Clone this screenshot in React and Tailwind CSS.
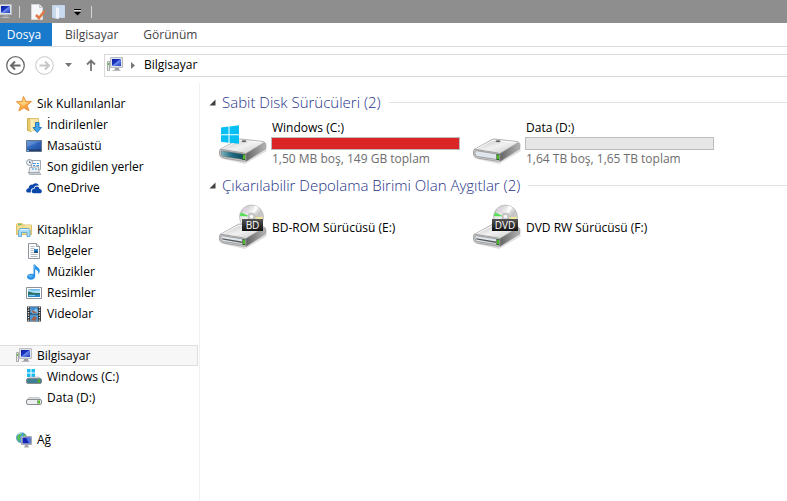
const StarIcon = () => (
  <svg width="16" height="16" viewBox="0 0 16 16">
    <defs>
      <linearGradient id="star" x1="0" y1="0" x2="1" y2="1">
        <stop offset="0" stopColor="#ffd36b" />
        <stop offset="0.5" stopColor="#fdb04a" />
        <stop offset="1" stopColor="#f08a2c" />
      </linearGradient>
    </defs>
    <path d="M7.500.3l2.300 4.900 5.800.3-4.400 3.800 1.800 5.600-5-3-5.200 3.200 1.700-5.800L.3 5.700l5.500-.4z" fill="url(#star)" stroke="#dd8128" strokeWidth=".7" strokeLinejoin="round" />
    <path d="M7.800 2.500l1.400 3.700 4 .3-6 2.900-4-2.900 3.600-.2z" fill="#ffe6a0" opacity=".6" />
  </svg>
);

const DownloadsIcon = () => (
  <svg width="16" height="16" viewBox="0 0 16 16">
    <path d="M1.500 1.500h4v13l-4-1z" fill="#e8c96b" stroke="#d0ae52" />
    <path d="M4.500 1.500h8v12h-8z" fill="#f8e3a0" stroke="#dfc26e" />
    <path d="M4.500 2v12.500l3-1V3z" fill="#fbeeba" />
    <path d="M9.500 5.500h3.500v5h2.500l-4.300 5-4.200-5h2.500z" fill="#3fa4ec" stroke="#1b6fc0" strokeWidth=".9" />
  </svg>
);

const DesktopIcon = () => (
  <svg width="16" height="16" viewBox="0 0 16 16">
    <defs>
      <linearGradient id="desktop" x1="0" y1="0" x2="1" y2="1">
        <stop offset="0" stopColor="#4f8ad4" />
        <stop offset="0.5" stopColor="#2f66bd" />
        <stop offset="1" stopColor="#1d4796" />
      </linearGradient>
    </defs>
    <path d="M.5 2.500h15v11H.5z" fill="url(#desktop)" stroke="#64748c" />
    <path d="M1 3h14L1 9z" fill="#fff" opacity=".15" />
    <path d="M1 11.500h14V13H1z" fill="#203f6c" />
    <path d="M1 12h2v1H1z" fill="#5ec4ef" />
  </svg>
);

const RecentIcon = () => (
  <svg width="16" height="16" viewBox="0 0 16 16">
    <path d="M5.500 1.500h9v9h-9z" fill="#f7f9fb" stroke="#a3a9b0" />
    <path d="M3.500 8.500l9-1 .5 6H3z" fill="#e9eef2" stroke="#a3a9b0" />
    <path d="M7 4.500h3M11 4.500h2M7 6.500h2M10.500 6.500H13M6 10h2M9 10h2" stroke="#3f9ae0" />
    <path d="M2 13.500h11.500l1.500 2H3.500z" fill="#c9ced2" stroke="#999fa5" strokeWidth=".7" />
    <circle cx="3.500" cy="3.500" r="3" fill="#eef3f8" stroke="#8d99a6" />
    <path d="M3.500 1.800v1.900H5" stroke="#47586b" strokeWidth=".8" fill="none" />
  </svg>
);

const OneDriveIcon = () => (
  <svg width="16" height="16" viewBox="0 0 16 16">
    <path d="M.2 11c0-1.700 1.100-2.700 2.500-2.800C2.700 5.500 5 4.200 7 4.700c1-1.700 4.500-2.300 6 1-4-.7-5 1.300-5.100 2.500C5.500 8 4.500 9.500 4.900 12.500H2C.9 12.500.2 11.900.2 11z" fill="#0a47a8" />
    <path d="M5.700 11.200c0-1.500 1.200-2.400 2.700-2.200C8.500 6 12.800 5.600 13.500 8.900c3 0 3.100 4.300.2 4.300H7.800c-1.400 0-2.100-.9-2.100-2z" fill="#0a47a8" />
  </svg>
);

const LibrariesIcon = () => (
  <svg width="16" height="16" viewBox="0 0 16 16">
    <path d="M.5 2.500l1-1H6l1 1.500h8.500v9.500H.5z" fill="#f6dd8c" stroke="#dcc069" />
    <path d="M2 2.700h3.500" stroke="#4fb56a" />
    <path d="M9 4h6" stroke="#fdf3c5" />
    <path d="M2.500 14.500V8.500l1.500-2h8.500l1.500 2v6h-3v-4h-5.500v4z" fill="#a9dbf5" stroke="#5aa6d6" strokeWidth=".9" />
    <path d="M4 7.500h8.500" stroke="#e2f5fd" />
  </svg>
);

const DocumentsIcon = () => (
  <svg width="16" height="16" viewBox="0 0 16 16">
    <path d="M2.500.5h8l3 3v12h-11z" fill="#fcfdfe" stroke="#8f949b" />
    <path d="M10.500.5v3h3" fill="#e3e7eb" stroke="#8f949b" />
    <path d="M4.500 3.500h4M4.500 5.500h4M4.500 7.500h3M4.500 9.500h3M4.500 11.500h7M4.500 13.500h7" stroke="#b4b9c0" />
    <path d="M8 6h4v4H8z" fill="#2e88d0" />
    <path d="M8 9l2-1.500L12 9v1H8z" fill="#224d79" />
  </svg>
);

const MusicIcon = () => (
  <svg width="16" height="16" viewBox="0 0 16 16">
    <path d="M7.500.5h1.700c.4 2.200 4.800 3 4.600 6.600-.1 1.300-.7 2.500-1.600 3.500.7-2.900-.9-4.600-3-5.300v7.200c0 1.900-2 3.200-4.300 3.200C2.700 15.700 1 14.500 1 12.800c0-1.900 2.300-3 4.500-3 .8 0 1.500.1 2 .4z" fill="#2891e8" />
    <ellipse cx="4.500" cy="12" rx="2.300" ry="1.300" fill="#5fb2f2" />
    <path d="M8.300 1v4" stroke="#8ccaf6" strokeWidth=".8" />
  </svg>
);

const PicturesIcon = () => (
  <svg width="16" height="16" viewBox="0 0 16 16">
    <path d="M.5 2.500h15v11H.5z" fill="#fff" stroke="#8d9299" />
    <path d="M2 4h12v8H2z" fill="#b5e0f6" />
    <path d="M2 4h12v1.500L6 6z" fill="#6fc0ec" />
    <path d="M2 6.500c3 .2 5 2 12 1.500v2H2z" fill="#2c7564" />
    <path d="M2 9.500h12V12H2z" fill="#2b83c4" />
    <path d="M3 10.500h6" stroke="#7fd0ee" />
  </svg>
);

const VideosIcon = () => (
  <svg width="16" height="16" viewBox="0 0 16 16">
    <path d="M1 .5h14v15H1z" fill="#2c2f33" />
    <path d="M4 1h8v6.500H4z" fill="#3f87c6" />
    <path d="M4 8.500h8V15H4z" fill="#4b9bd8" />
    <path d="M4 2l3 3 3-3 2 3v2.500H6z" fill="#7dc2ea" />
    <path d="M5 4l3 1 3 2H7zM5 14l3-4 3 2-2 3z" fill="#a7604b" />
    <path d="M2.500 1v14M13.500 1v14" stroke="#e6e9ec" strokeWidth="1.400" strokeDasharray="1.300 1.200" />
  </svg>
);

const ComputerIcon = () => (
  <svg width="16" height="16" viewBox="0 0 16 16">
    <defs>
      <linearGradient id="screen" x1="0" y1="0" x2="1" y2="1">
        <stop offset="0" stopColor="#0b1e9c" />
        <stop offset="0.45" stopColor="#1a35c4" />
        <stop offset="0.5" stopColor="#6f8dea" />
        <stop offset="1" stopColor="#1c39bd" />
      </linearGradient>
    </defs>
    <path d="M.5 4.500h2v9h-2z" fill="#e8ebe8" stroke="#9ea39e" strokeWidth=".9" />
    <path d="M1 6h1v2H1z" fill="#4fbf3c" />
    <path d="M3.500.5h12v10h-12z" fill="#dfe2e6" stroke="#b9bdc2" />
    <path d="M5 2h9v7H5z" fill="url(#screen)" />
    <path d="M8 11h4l.5 2h-5z" fill="#9a9ea4" />
    <path d="M5.500 13.500h8" stroke="#b8bcc0" />
  </svg>
);

const DriveIcon = ({ system }) => (
  <svg width="16" height="16" viewBox="0 0 16 16">
    {system && <path d="M1 0h3.500v3.500H1zM5.500 0H9v3.500H5.500zM1 4.500h3.500V8H1zM5.500 4.500H9V8H5.500z" fill="#19bdf2" />}
    <path d={system ? 'M3 8h10l2.500 2.500H.5z' : 'M3 7.500h10l2.500 3H.5z'} fill="#d9dbdd" stroke="#b1b4b7" strokeWidth=".6" />
    <rect x=".5" y="9.500" width="15" height="5" rx="1.500" fill={system ? '#3d7f95' : '#eceeef'} stroke="#8b8e91" />
    <path d="M12 10.500h2v3h-2z" fill="#4cbb17" />
    <path d="M11.500 10v4" stroke="#777" strokeWidth=".6" />
  </svg>
);

const NetworkIcon = () => (
  <svg width="16" height="16" viewBox="0 0 16 16">
    <circle cx="5.500" cy="5.800" r="5" fill="#3f9fe0" stroke="#2b6fae" strokeWidth=".6" />
    <path d="M2 3c2-2 3-1.500 4-1.500L5 4 3.500 5l1 2-1 2.500C1 8.500.6 5 2 3zM7.500 1.500c2 .5 2.500 1.500 3 3h-3z" fill="#5dbe52" />
    <path d="M2 2.500c1.500-1.500 3-1.500 4-1.500" stroke="#d6f3fd" fill="none" />
    <path d="M5.500 4.500h10v8h-10z" fill="#dfe2e6" stroke="#a4a8ad" />
    <path d="M6.500 5.500h8v6h-8z" fill="#1226b0" />
    <path d="M10 5.500h4.500v6H13z" fill="#5474e0" />
    <path d="M9 13h3l1 2.500H8z" fill="#a5a9ae" />
  </svg>
);

const LargeDriveIcon = ({ kind, label }) => (
  <svg width="48" height="48" viewBox="0 0 48 48" className="shrink-0">
    <defs>
      <linearGradient id="driveTop" x1="0" y1="0" x2="1" y2="1">
        <stop offset="0" stopColor="#b9b9b9" />
        <stop offset="0.5" stopColor="#f1f1f1" />
        <stop offset="1" stopColor="#c4c4c4" />
      </linearGradient>
      <linearGradient id="driveSide" x1="0" y1="0" x2="1" y2="0">
        <stop offset="0" stopColor="#5c5c5c" />
        <stop offset="1" stopColor="#b5b5b5" />
      </linearGradient>
      <linearGradient id="disc" x1="0" y1="0" x2="1" y2="1">
        <stop offset="0" stopColor="#b4b4b4" />
        <stop offset="0.4" stopColor="#f2f2f2" />
        <stop offset="0.6" stopColor="#c3c3c3" />
        <stop offset="1" stopColor="#e9e9e9" />
      </linearGradient>
      <linearGradient id="teal" x1="0" y1="0" x2="1" y2="0">
        <stop offset="0" stopColor="#7fb3bd" />
        <stop offset="0.5" stopColor="#1f6c83" />
        <stop offset="1" stopColor="#0f4c61" />
      </linearGradient>
      <linearGradient id="plate" x1="0" y1="0" x2="0" y2="1">
        <stop offset="0" stopColor="#555" />
        <stop offset="1" stopColor="#111" />
      </linearGradient>
    </defs>
    <path d="M4 40l22 5 22-13-2-4z" fill="#000" opacity=".13" />
    <path d="M25 34l20.500-10.500q1.500.5 1.500 2v4L27 42.500z" fill="url(#driveSide)" stroke="#888" strokeWidth=".5" />
    <path d="M1 30.500L19 20.500q1-.5 2.500-.5l23 2.500q1.500.5.5 1.300L27 34.500q-1 .5-3 .3z" fill="url(#driveTop)" stroke="#9b9b9b" strokeWidth=".7" />
    <path d="M2.500 30.500L20 21.200l22 2.300" fill="none" stroke="#fff" strokeWidth=".8" />
    <path d="M.5 32q0-2 2-1.700L25 34q2 .5 2 2.500v4q0 2-2 1.800L3.500 39Q.5 38 .5 35z" fill="#d0d0d0" stroke="#8c8c8c" strokeWidth=".7" />
    <path d="M2 32.700q0-1.200 1.500-1L24 35v5.500L4 37.500q-2-.8-2-3z" fill={kind === 'system' ? 'url(#teal)' : '#dfe5ec'} stroke="#777" strokeWidth=".6" />
    {kind === 'optical' && <path d="M3 34.200l20 3.300v1.400L3.500 35.600z" fill="#555" />}
    <path d="M23.500 35l2.800.4v5.800l-2.800-.4z" fill="#244c1c" />
    <path d="M24.200 36l1.600.2v4.100l-1.600-.3z" fill="#58d82c" />
    {kind !== 'optical' && <ellipse cx="25" cy="22.300" rx="2.500" ry="1" fill="#666" />}
    {kind === 'system' && <path d="M2 8.500l7.500-1v7.700H2zM10.500 7.400L20 6.200v9h-9.500zM2 16.200h7.500v7.600l-7.500-1zM10.500 16.200H20v8.600l-9.500-1z" fill="#08bff3" />}
    {kind === 'optical' && (
      <g>
        <circle cx="32.500" cy="13" r="12" fill="url(#disc)" stroke="#b0b0b0" strokeWidth=".7" />
        <path d="M31 12.500L22 8.500A12 12 0 0 0 21 12z" fill="#55df56" />
        <path d="M32.500 13l10.500 3a12 12 0 0 0 1-3z" fill="#f2e89a" />
        <path d="M32.500 13L24 4.500l3-2z" fill="#e2d2e6" opacity=".8" />
        <path d="M32.500 13l3-11.500 4 2z" fill="#fff" opacity=".8" />
        <circle cx="32.500" cy="12.500" r="3.500" fill="#cfcfcf" stroke="#aaa" strokeWidth=".6" />
        <circle cx="32.500" cy="12.500" r="1.500" fill="#fff" />
        <rect x={label === 'BD' ? 23 : 19} y="15" width={label === 'BD' ? 21 : 26} height="12" fill="url(#plate)" />
        <text x={label === 'BD' ? 33.5 : 32} y="24.500" textAnchor="middle" fontSize="10" fontWeight="500" fill="#fff">{label}</text>
      </g>
    )}
  </svg>
);

const favorites = [
  { name: 'İndirilenler', icon: <DownloadsIcon /> },
  { name: 'Masaüstü', icon: <DesktopIcon /> },
  { name: 'Son gidilen yerler', icon: <RecentIcon /> },
  { name: 'OneDrive', icon: <OneDriveIcon /> },
];

const libraries = [
  { name: 'Belgeler', icon: <DocumentsIcon /> },
  { name: 'Müzikler', icon: <MusicIcon /> },
  { name: 'Resimler', icon: <PicturesIcon /> },
  { name: 'Videolar', icon: <VideosIcon /> },
];

const drives = [
  { name: 'Windows (C:)', icon: <DriveIcon system /> },
  { name: 'Data (D:)', icon: <DriveIcon /> },
];

const NavGroup = ({ name, icon, items = [], selected }) => (
  <ul>
    <li>
      <a
        href="#"
        className={`flex items-center gap-[5px] h-[21px] pl-4 border border-l-0 ${selected ? 'bg-[#f7f7f7] border-[#dedede]' : 'border-transparent'}`}
      >
        {icon}
        {name}
      </a>
    </li>
    {items.map(item => (
      <li key={item.name}>
        <a href="#" className="flex items-center gap-[5px] h-[21px] pl-[26px]">
          {item.icon}
          {item.name}
        </a>
      </li>
    ))}
  </ul>
);

const Section = ({ title, children }) => (
  <section>
    <h2 className="flex items-center h-5 text-[15px] font-light text-[#1e3287] whitespace-nowrap">
      <svg width="7" height="7" viewBox="0 0 7 7" className="mr-[6px]">
        <path d="M6.500.5v6h-6z" fill="#404040" />
      </svg>
      {title}
      <span className="flex-1 h-px ml-2 bg-[#e2e2e2]" />
    </h2>
    <div className="flex flex-wrap pl-[10px] pt-[7px]">{children}</div>
  </section>
);

const DiskTile = ({ name, info, used, kind }) => (
  <div className="flex w-[254px] h-12 gap-1">
    <LargeDriveIcon kind={kind} />
    <div className="w-[189px]">
      <div className="h-[18px] pl-px leading-[18px]">{name}</div>
      <div role="meter" aria-label={name} aria-valuenow={used} className="h-[13px] border border-[#bcbcbc] bg-[#e6e6e6]">
        <div className="h-full bg-[#da2626]" style={{ width: `${used}%` }} />
      </div>
      <div className="pl-px leading-[18px] text-[#6d6d6d]">{info}</div>
    </div>
  </div>
);

const OpticalTile = ({ name, label }) => (
  <div className="flex items-center w-[254px] h-[52px] gap-[5px]">
    <LargeDriveIcon kind="optical" label={label} />
    {name}
  </div>
);

const App = () => {
  return (
    <div className="min-h-screen flex flex-col bg-white text-black text-[12px] leading-4 font-['Segoe_UI','Open_Sans',sans-serif] overflow-hidden">
      <header>
        <div className="flex items-center h-[23px] bg-[#8e8e8e]">
          <span className="-ml-1"><ComputerIcon /></span>
          <span className="w-px h-3 ml-[7px] bg-[#d5d5d5]" />
          <button type="button" aria-label="Özellikler" className="ml-[10px]">
            <svg width="16" height="16" viewBox="0 0 16 16">
              <path d="M1.500.5h8l3 3v12h-11z" fill="#f6f7f9" stroke="#d3d6da" />
              <path d="M9.500.5v3h3" fill="#dfe3e8" stroke="#c3c7cc" />
              <path d="M6 11l3 3 5.500-7" stroke="#e07a45" strokeWidth="2.500" fill="none" />
            </svg>
          </button>
          <button type="button" aria-label="Yeni klasör" className="ml-[5px]">
            <svg width="16" height="16" viewBox="0 0 16 16">
              <path d="M1.500 1.500h5v13l-5-1z" fill="#c9d9ea" stroke="#c3d3e6" />
              <path d="M5.500 2.500l1-1h7v12h-8z" fill="#c8daf0" stroke="#c3d4e8" />
              <path d="M5 3l3 1v11l-3-1z" fill="#edf4fb" />
            </svg>
          </button>
          <button type="button" aria-label="Hızlı erişimi özelleştir" className="ml-[7px]">
            <svg width="7" height="8" viewBox="0 0 7 8">
              <path d="M0 1.500h7" stroke="#000" />
              <path d="M0 2.500h7" stroke="#ddd" />
              <path d="M0 4h7L3.500 7.500z" fill="#000" />
            </svg>
          </button>
          <span className="w-px h-3 ml-[10px] bg-[#d5d5d5]" />
        </div>

        <div className="flex h-6 border-b border-[#dadbdc] text-[#444]">
          <button type="button" className="w-[52px] pr-1 bg-[#1979ca] text-white">Dosya</button>
          <button type="button" className="px-[13px]">Bilgisayar</button>
          <button type="button" className="px-3">Görünüm</button>
        </div>

        <div className="flex items-center h-9 pl-[5px]">
          <button type="button" aria-label="Geri">
            <svg width="21" height="21" viewBox="0 0 21 21" fill="none" stroke="#6a6a6a">
              <circle cx="10.500" cy="10.500" r="8.800" strokeWidth="1.300" />
              <path d="M15.500 10.500H6.500M10 6.500l-4 4 4 4" strokeWidth="2" />
            </svg>
          </button>
          <button type="button" aria-label="İleri" className="ml-2">
            <svg width="21" height="21" viewBox="0 0 21 21" fill="none" stroke="#c6c6c6">
              <circle cx="10.500" cy="10.500" r="8.800" />
              <path d="M5.500 10.500h9M11 6.500l4 4-4 4" strokeWidth="2" />
            </svg>
          </button>
          <button type="button" aria-label="Son konumlar" className="ml-[10px]">
            <svg width="7" height="4" viewBox="0 0 7 4"><path d="M0 0h7L3.500 4z" fill="#777" /></svg>
          </button>
          <button type="button" aria-label="Yukarı" className="ml-[14px]">
            <svg width="10" height="12" viewBox="0 0 10 12" fill="none" stroke="#757575" strokeWidth="1.800">
              <path d="M5 12V1.500M1 5.500l4-4 4 4" />
            </svg>
          </button>
          <div className="flex flex-1 items-center h-[23px] ml-2 pl-[2px] border border-r-0 border-[#d9d9d9]">
            <ComputerIcon />
            <svg width="4" height="7" viewBox="0 0 4 7" className="ml-2"><path d="M0 0l4 3.500L0 7z" fill="#777" /></svg>
            <a href="#" className="ml-[9px]">Bilgisayar</a>
          </div>
        </div>
      </header>

      <div className="flex flex-1">
        <nav className="w-[200px] shrink-0 flex flex-col gap-[21px] pt-[10px] pr-px border-r border-[#f0f0f0]">
          <NavGroup name="Sık Kullanılanlar" icon={<StarIcon />} items={favorites} />
          <NavGroup name="Kitaplıklar" icon={<LibrariesIcon />} items={libraries} />
          <NavGroup name="Bilgisayar" icon={<ComputerIcon />} items={drives} selected />
          <NavGroup name="Ağ" icon={<NetworkIcon />} />
        </nav>

        <main className="flex-1 flex flex-col gap-2 pt-[9px] pl-[9px]">
          <Section title="Sabit Disk Sürücüleri (2)">
            <DiskTile name="Windows (C:)" info="1,50 MB boş, 149 GB toplam" used={100} kind="system" />
            <DiskTile name="Data (D:)" info="1,64 TB boş, 1,65 TB toplam" used={0} />
          </Section>
          <Section title="Çıkarılabilir Depolama Birimi Olan Aygıtlar (2)">
            <OpticalTile name="BD-ROM Sürücüsü (E:)" label="BD" />
            <OpticalTile name="DVD RW Sürücüsü (F:)" label="DVD" />
          </Section>
        </main>
      </div>
    </div>
  );
};

export default App;
